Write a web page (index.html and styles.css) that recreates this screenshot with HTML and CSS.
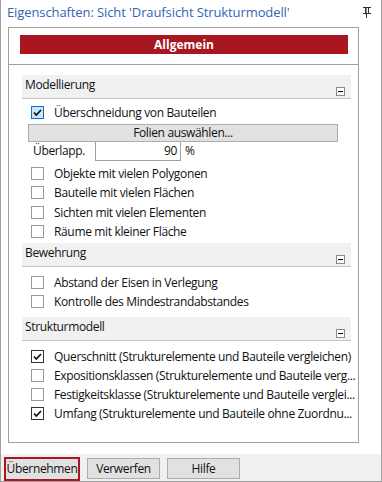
FILE: index.html
```html
<!DOCTYPE html>
<html lang="de">
<head>
<meta charset="utf-8">
<title>Eigenschaften</title>
<link rel="stylesheet" href="styles.css">
</head>
<body>
<div class="window">
  <div class="titlebar">
    <span class="title">Eigenschaften: Sicht 'Draufsicht Strukturmodell'</span>
    <svg class="pin" width="9" height="11" viewBox="0 0 9 11">
      <rect x="0" y="0" width="8" height="1" fill="#333"/>
      <rect x="2" y="1" width="1" height="5" fill="#333"/>
      <rect x="3" y="1" width="1" height="5" fill="#888"/>
      <rect x="5" y="1" width="1" height="5" fill="#333"/>
      <rect x="0" y="6" width="8" height="1" fill="#333"/>
      <rect x="3" y="7" width="1" height="4" fill="#333"/>
    </svg>
  </div>
  <div class="panel">
    <div class="panel-top">
      <div class="redbar">Allgemein</div>
    </div>
    <div class="panel-body">
      <div class="section">
        <div class="sec-head"><span>Modellierung</span><span class="collapse"></span></div>
        <div class="sec-body sec-model">
          <div class="row"><span class="cb cb-focus"><svg width="11" height="11" viewBox="0 0 11 11"><polyline points="2,5.5 4.3,8 9,3" fill="none" stroke="#111" stroke-width="1.7"/></svg></span><span class="lbl">Überschneidung von Bauteilen</span></div>
          <div class="btn-wide">Folien auswählen...</div>
          <div class="overlap"><span class="ov-lbl">Überlapp.</span><span class="ov-input">90</span><span class="ov-unit">%</span></div>
          <div class="rows-tall">
            <div class="row"><span class="cb"></span><span class="lbl">Objekte mit vielen Polygonen</span></div>
            <div class="row"><span class="cb"></span><span class="lbl">Bauteile mit vielen Flächen</span></div>
            <div class="row"><span class="cb"></span><span class="lbl">Sichten mit vielen Elementen</span></div>
            <div class="row"><span class="cb"></span><span class="lbl">Räume mit kleiner Fläche</span></div>
          </div>
        </div>
      </div>
      <div class="section">
        <div class="sec-head"><span>Bewehrung</span><span class="collapse"></span></div>
        <div class="sec-body sec-bew">
          <div class="row"><span class="cb"></span><span class="lbl">Abstand der Eisen in Verlegung</span></div>
          <div class="row"><span class="cb"></span><span class="lbl">Kontrolle des Mindestrandabstandes</span></div>
        </div>
      </div>
      <div class="section">
        <div class="sec-head"><span>Strukturmodell</span><span class="collapse"></span></div>
        <div class="sec-body sec-struct">
          <div class="row"><span class="cb cb-on"><svg width="11" height="11" viewBox="0 0 11 11"><polyline points="2,5.5 4.3,8 9,3" fill="none" stroke="#111" stroke-width="1.7"/></svg></span><span class="lbl">Querschnitt (Strukturelemente und Bauteile vergleichen)</span></div>
          <div class="row"><span class="cb"></span><span class="lbl">Expositionsklassen (Strukturelemente und Bauteile verg...</span></div>
          <div class="row"><span class="cb"></span><span class="lbl">Festigkeitsklasse (Strukturelemente und Bauteile verglei...</span></div>
          <div class="row"><span class="cb cb-on"><svg width="11" height="11" viewBox="0 0 11 11"><polyline points="2,5.5 4.3,8 9,3" fill="none" stroke="#111" stroke-width="1.7"/></svg></span><span class="lbl">Umfang (Strukturelemente und Bauteile ohne Zuordnu...</span></div>
        </div>
      </div>
    </div>
  </div>
  <div class="spacer"></div>
  <div class="footer">
    <span class="btn btn-primary">Übernehmen</span>
    <span class="btn">Verwerfen</span>
    <span class="btn">Hilfe</span>
  </div>
</div>
</body>
</html>
```
FILE: styles.css
```css
* { box-sizing: border-box; }
html, body { margin: 0; padding: 0; }
body {
  width: 382px;
  height: 482px;
  background: #fff;
  font-family: "Open Sans", "Noto Sans", sans-serif;
  font-size: 12px;
  letter-spacing: -0.35px;
  color: #111;
}
.window {
  width: 382px;
  height: 482px;
  border: 1px solid #a0a0a0;
  border-top: none;
  display: flex;
  flex-direction: column;
  background: #fff;
}
.titlebar {
  height: 27px;
  flex: none;
  display: flex;
  justify-content: space-between;
  align-items: flex-start;
  padding: 4px 9px 0 6px;
}
.title {
  font-size: 13px;
  line-height: 17px;
  letter-spacing: -0.1px;
  color: #2f66b3;
  white-space: nowrap;
}
.pin { margin-top: 3px; }
.panel {
  flex: none;
  margin-left: 7px;
  width: 351px;
  height: 416px;
  border: 1px solid #a0a0a0;
  display: flex;
  flex-direction: column;
}
.panel-top {
  height: 37px;
  flex: none;
  padding: 7px 0 0 11px;
  border-bottom: 1px solid #a0a0a0;
}
.redbar {
  width: 328px;
  height: 19px;
  background: #a8171f;
  color: #fff;
  font-weight: bold;
  text-align: center;
  line-height: 19px;
  font-size: 12px;
  letter-spacing: 0;
}
.panel-body {
  padding: 10px 0 0 13px;
}
.section { width: 329px; }
.sec-head {
  height: 24px;
  background: #f1f1f1;
  border-bottom: 1px solid #c3c3c3;
  display: flex;
  justify-content: space-between;
  align-items: flex-end;
  padding: 0 6px 2px 3px;
  line-height: 16px;
}
.sec-head > span:first-child { margin-bottom: 3px; }
.collapse {
  width: 9px;
  height: 9px;
  border: 1px solid #8a8a8a;
  background: #fff;
  display: flex;
  align-items: center;
  justify-content: center;
}
.collapse::after {
  content: "";
  width: 5px;
  height: 1px;
  background: #000;
}
.sec-body { padding-left: 9px; }
.sec-model { padding-top: 4px; padding-bottom: 2px; }
.sec-bew { padding-top: 6px; padding-bottom: 6px; }
.sec-struct { padding-top: 6px; }
.row {
  height: 19px;
  display: flex;
  align-items: center;
  white-space: nowrap;
}
.rows-tall { margin-top: 3px; }
.rows-tall .row { height: 19.333px; }
.cb {
  width: 13px;
  height: 13px;
  border: 1px solid #9a9a9a;
  background: #fff;
  flex: none;
  display: flex;
  align-items: center;
  justify-content: center;
}
.cb-on { border-color: #333; }
.cb-focus { border-color: #1a6fb8; background: #cce4f7; }
.lbl { margin-left: 10px; }
.btn-wide {
  margin: 2px 0 0 -3px;
  width: 310px;
  height: 18px;
  background: #e1e1e1;
  border: 1px solid #adadad;
  text-align: center;
  line-height: 16px;
}
.overlap {
  height: 19px;
  display: flex;
  align-items: stretch;
}
.ov-lbl { width: 64px; padding-left: 2px; line-height: 18px; }
.ov-input {
  width: 86px;
  border: 1px solid #a0a0a0;
  border-top: none;
  text-align: right;
  padding-right: 3px;
  line-height: 18px;
}
.ov-unit { margin-left: 4px; line-height: 18px; }
.spacer { flex: 1; }
.footer {
  height: 27px;
  flex: none;
  background: #f0f0f0;
  display: flex;
  align-items: flex-start;
  padding: 3px 0 0 3px;
  gap: 7px;
}
.btn {
  width: 73px;
  height: 21px;
  background: #e1e1e1;
  border: 1px solid #adadad;
  text-align: center;
  line-height: 19px;
  margin-top: 1px;
}
.btn-primary {
  width: 76px;
  height: 24px;
  margin-top: 0;
  border: 2px solid #a8171f;
  line-height: 20px;
}
```
